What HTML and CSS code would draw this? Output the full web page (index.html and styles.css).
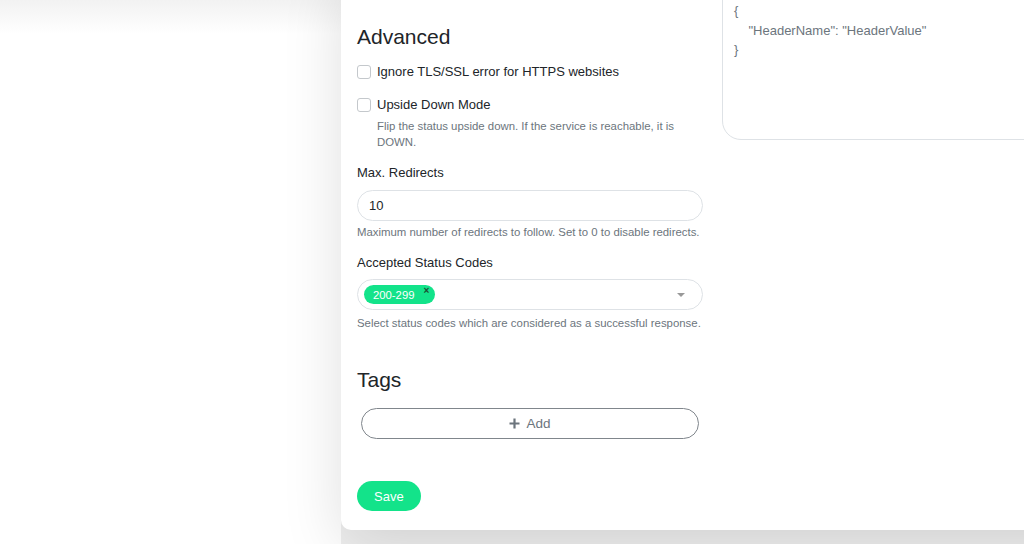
FILE: index.html
```html
<!DOCTYPE html>
<html lang="en">
<head>
    <meta charset="UTF-8">
    <meta name="viewport" content="width=device-width, initial-scale=1.0">
    <title>Edit Monitor</title>
    <link rel="stylesheet" href="styles.css">
</head>
<body>
    <div class="layout">
        <aside class="monitor-list"></aside>

        <main class="card">
            <div class="cols">
                <div class="col">
                    <h2 class="title">Advanced</h2>

                    <label class="check">
                        <span class="box"></span>
                        Ignore TLS/SSL error for HTTPS websites
                    </label>

                    <label class="check check-second">
                        <span class="box"></span>
                        Upside Down Mode
                    </label>
                    <p class="help help-check">Flip the status upside down. If the service is reachable, it is DOWN.</p>

                    <p class="field-label">Max. Redirects</p>
                    <div class="input">10</div>
                    <p class="help">Maximum number of redirects to follow. Set to 0 to disable redirects.</p>

                    <p class="field-label">Accepted Status Codes</p>
                    <div class="input multiselect">
                        <span class="tag">200-299 <span class="tag-x">×</span></span>
                        <span class="caret"></span>
                    </div>
                    <p class="help help-select">Select status codes which are considered as a successful response.</p>

                    <h2 class="title title-tags">Tags</h2>
                    <button class="btn-add">
                        <svg width="11" height="11" viewBox="0 0 11 11"><path d="M5.5 0.5v10M0.5 5.5h10" stroke="#6c757d" stroke-width="2.2"/></svg>
                        Add
                    </button>

                    <button class="btn-save">Save</button>
                </div>

                <div class="col">
                    <div class="headers">{
    "HeaderName": "HeaderValue"
}</div>
                </div>
            </div>
        </main>
    </div>
</body>
</html>
```

FILE: styles.css
```css
body {
    margin: 0;
    font-family: "Liberation Sans", Arial, sans-serif;
    background-color: #efefef;
    color: #212529;
    height: 544px;
    overflow: hidden;
}
.layout {
    display: flex;
    height: 544px;
}
.monitor-list {
    width: 341px;
    flex-shrink: 0;
    background: linear-gradient(to bottom, #f2f2f2, #ffffff 34px);
}
.card {
    position: relative;
    flex-shrink: 0;
    width: 820px;
    height: 560px;
    margin-top: -30px;
    box-sizing: border-box;
    padding: 10px 16px 0 16px;
    background-color: #fff;
    border-radius: 10px;
    box-shadow: 0 15px 60px rgba(0, 0, 0, 0.13);
}
.cols {
    display: grid;
    grid-template-columns: 346px 420px;
    gap: 19px;
}
.col {
    display: flex;
    flex-direction: column;
    align-items: flex-start;
}
.title {
    margin: 45px 0 0 0;
    font-size: 21px;
    font-weight: 400;
    line-height: 24px;
}
.title-tags {
    margin-top: 37px;
}
.check {
    display: flex;
    align-items: center;
    gap: 6px;
    margin-top: 13px;
    font-size: 13px;
    line-height: 20px;
}
.check-second {
    margin-top: 13px;
}
.box {
    width: 12px;
    height: 12px;
    border: 1px solid #c4c8cc;
    border-radius: 3px;
}
.help {
    margin: 3px 0 0 0;
    font-size: 11.4px;
    line-height: 16px;
    color: #6c757d;
}
.help-check {
    padding-left: 20px;
    width: 310px;
}
.help-select {
    margin-top: 5px;
}
.field-label {
    margin: 13px 0 0 0;
    font-size: 13px;
    line-height: 20px;
}
.input {
    margin-top: 7px;
    width: 100%;
    height: 31px;
    box-sizing: border-box;
    border: 1px solid #dee2e6;
    border-radius: 16px;
    padding: 0 11px;
    display: flex;
    align-items: center;
    font-size: 13px;
}
.multiselect {
    margin-top: 6px;
    padding: 0 6px;
    justify-content: space-between;
}
.tag {
    display: flex;
    align-items: center;
    height: 19px;
    padding: 0 6px 0 9px;
    border-radius: 10px;
    background-color: #13e38a;
    color: #fff;
    font-size: 11.3px;
}
.tag-x {
    margin-left: 9px;
    font-size: 10px;
    font-weight: 700;
    align-self: flex-start;
    line-height: 12px;
    color: #1d4d33;
}
.caret {
    margin-right: 11px;
    border-left: 4px solid transparent;
    border-right: 4px solid transparent;
    border-top: 4px solid #999;
}
.btn-add {
    margin: 16px 0 0 4px;
    width: 338px;
    height: 31px;
    border: 1px solid #80868c;
    border-radius: 16px;
    background-color: #fff;
    font-family: inherit;
    font-size: 13.5px;
    color: #6c757d;
    display: flex;
    align-items: center;
    justify-content: center;
    gap: 6px;
}
.btn-save {
    margin-top: 42px;
    height: 30px;
    padding: 0 17px;
    border: none;
    border-radius: 15px;
    background-color: #13e38a;
    color: #fff;
    font-family: inherit;
    font-size: 13px;
}
.headers {
    width: 100%;
    height: 160px;
    box-sizing: border-box;
    padding: 20px 11px;
    border: 1px solid #dee2e6;
    border-radius: 19px;
    white-space: pre;
    font-size: 13px;
    line-height: 19.5px;
    color: #6c757d;
}
```
